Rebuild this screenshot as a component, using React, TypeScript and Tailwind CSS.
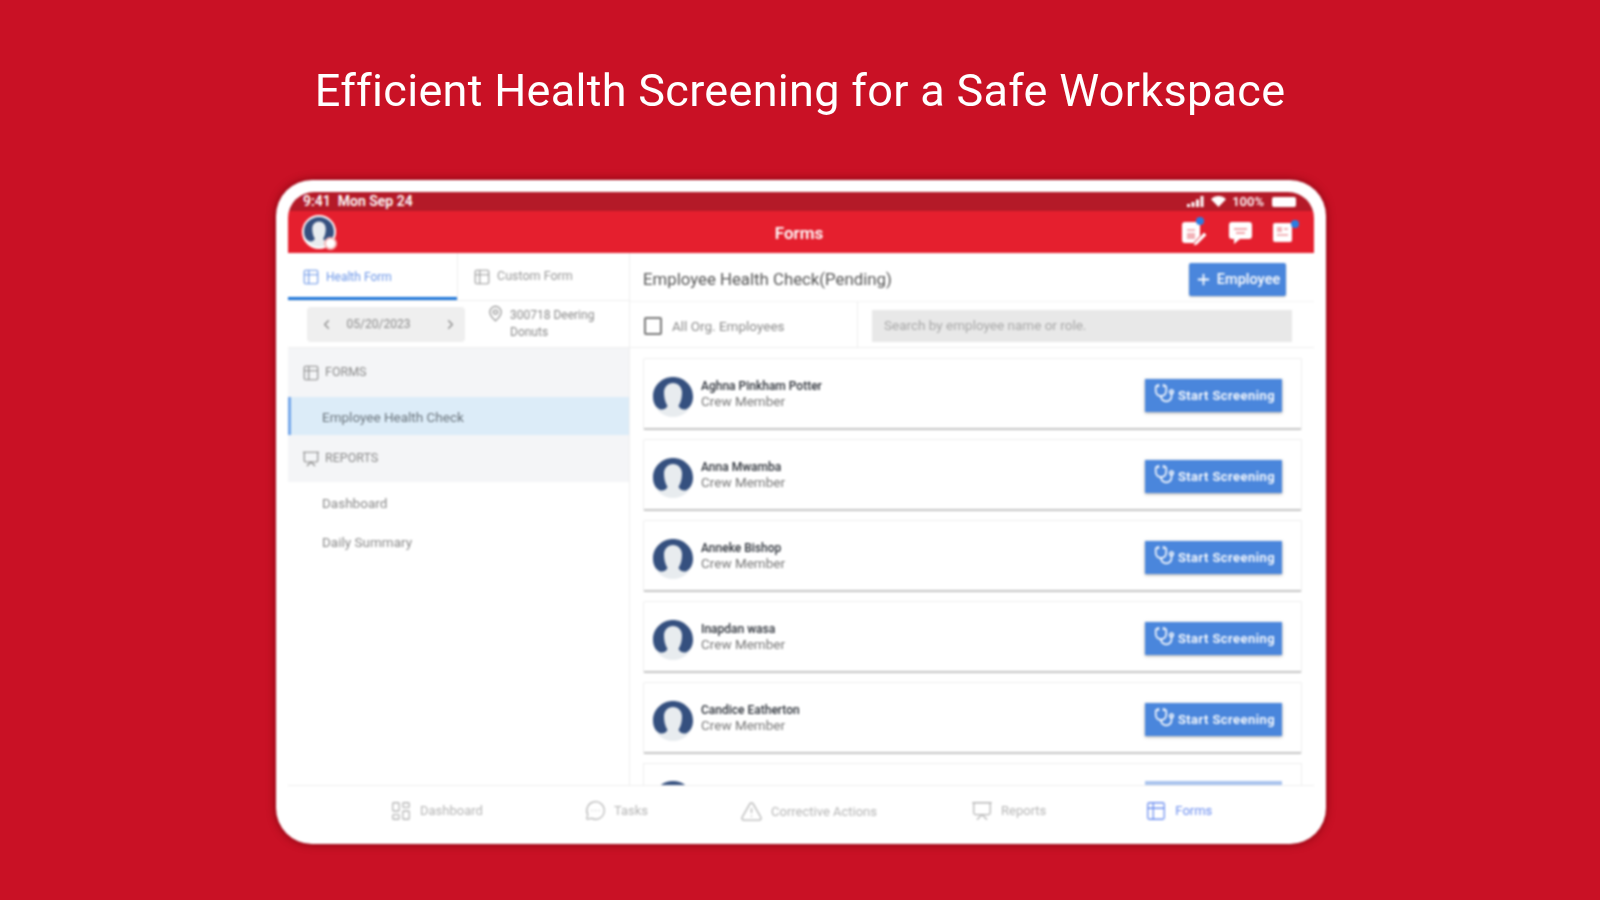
import React from "react";
import {
  ChevronLeft, ChevronRight, MapPin, Plus, Stethoscope,
  LayoutDashboard, MessageCircleMore, TriangleAlert, Presentation, Table2,
} from "lucide-react";

const Avatar = ({ size = 40 }: { size?: number }) => (
  <svg width={size} height={size} viewBox="0 0 40 40" className="shrink-0">
    <circle cx="20" cy="20" r="20" fill="#e8ecef" />
    <path d="M20 0C9 0 0 8.500 0 19.500C0 25 2 29 5 31C7.500 33.500 12.500 33 14.500 29C12 25 11 20 11 15.500C11 10 15 6 20 6C25 6 29 10 29 15.500C29 20 28 25 25.500 29C27.500 33 32.500 33.500 35 31C38 29 40 25 40 19.500C40 8.500 31 0 20 0Z" fill="#35507f" />
  </svg>
);

const ClipIcon = () => (
  <svg width="30" height="30" viewBox="0 0 30 30">
    <rect x="3" y="5" width="18" height="21" rx="3" fill="#ffffff" />
    <rect x="8" y="12" width="8" height="2" fill="#f2b3b8" />
    <rect x="8" y="16" width="8" height="6" fill="#f2b3b8" />
    <path d="M15 26L25 15L28 18L18 28L14 29Z" fill="#ffffff" stroke="#e51f2e" strokeWidth="1" />
  </svg>
);

const BubbleIcon = () => (
  <svg width="25" height="25" viewBox="0 0 25 25">
    <path d="M4 2H21A3 3 0 0 1 24 5V16A3 3 0 0 1 21 19H12L6 24V19H4A3 3 0 0 1 1 16V5A3 3 0 0 1 4 2Z" fill="#ffffff" />
    <rect x="6" y="8" width="13" height="2" fill="#f2a5ab" />
    <rect x="8" y="12" width="9" height="2" fill="#f2a5ab" />
  </svg>
);

const NoteIcon = () => (
  <svg width="24" height="24" viewBox="0 0 24 24">
    <rect x="1" y="3" width="19" height="19" rx="2" fill="#ffffff" />
    <rect x="5" y="7" width="5" height="5" fill="#f2b3b8" />
    <rect x="5" y="14" width="11" height="2" fill="#f2b3b8" />
    <rect x="12" y="8" width="4" height="2" fill="#f2b3b8" />
  </svg>
);

const SignalBars = () => (
  <svg width="18" height="11" viewBox="0 0 18 11">
    <rect x="0" y="8" width="3" height="3" fill="#ffffff" />
    <rect x="4.500" y="6" width="3" height="5" fill="#ffffff" />
    <rect x="9" y="3.500" width="3" height="7.500" fill="#ffffff" />
    <rect x="13.500" y="0" width="3" height="11" fill="#ffffff" />
  </svg>
);

const WifiFilled = () => (
  <svg width="15" height="11" viewBox="0 0 15 11">
    <path d="M7.500 11L0 3.200C4.200 -1 10.800 -1 15 3.200Z" fill="#ffffff" />
  </svg>
);

const people = ["Aghna Pinkham Potter", "Anna Mwamba", "Anneke Bishop", "Inapdan wasa", "Candice Eatherton"];

function Card({ name }: { name: string }) {
  return (
    <div className="h-[72px] shrink-0 flex items-center pl-[9px] pr-[19px] bg-white rounded-[2px] border border-[#eeeeee] border-b-2 border-b-[#c4c4c4]">
      <div className="mt-[6px]"><Avatar /></div>
      <div className="ml-[8px] flex flex-col">
        <span className="text-[12px] leading-[15px] font-medium text-[#2b3038]">{name}</span>
        <span className="text-[13.500px] leading-[15px] text-[#777]">Crew Member</span>
      </div>
      <button className="ml-auto mt-[4px] w-[137px] h-[33px] bg-[#4a86dc] shadow-[0_1px_3px_rgba(0,0,0,0.35)] flex items-center justify-center gap-[3px] pl-[2px] text-white text-[13px] font-semibold tracking-[0.45px]">
        <Stethoscope size={21} className="-mt-[5px]" strokeWidth={1.8} />
        <span>Start Screening</span>
      </button>
    </div>
  );
}

function NavItem({ icon, label, active, className = "" }: { icon: React.ReactNode; label: string; active?: boolean; className?: string }) {
  return (
    <div className={`flex items-center gap-[8px] text-[13px] ${active ? "text-[#6d8ff0]" : "text-[#b5b5b5]"} ${className}`}>
      {icon}
      <span>{label}</span>
    </div>
  );
}

export default function App() {
  return (
    <div className="w-[1600px] h-[900px] bg-[#c91125] flex flex-col items-center overflow-hidden" style={{ fontFamily: "Roboto, 'Liberation Sans', sans-serif" }}>
      <h1 className="mt-[63px] h-[56px] leading-[56px] text-[45px] font-normal text-white blur-[0.4px] tracking-[0.3px] [font-variant-ligatures:none]">
        Efficient Health Screening for a Safe Workspace
      </h1>
      <div className="mt-[61px] ml-[2px] w-[1050px] h-[664px] bg-white rounded-[36px] pt-[12px] px-[12px] flex flex-col shadow-[0_0_8px_rgba(110,0,10,0.85)] blur-[0.9px]">
        {/* status bar + header */}
        <div className="rounded-t-[26px] overflow-hidden shrink-0">
          <div className="h-[19px] bg-[#b41a28] flex items-center justify-between pl-[15px] pr-[18px] text-white text-[14px] font-semibold">
            <span>9:41&nbsp;&nbsp;Mon Sep 24</span>
            <div className="flex items-center gap-[6px] text-[13px]">
              <SignalBars />
              <WifiFilled />
              <span>100%</span>
              <span className="ml-[2px] w-[24px] h-[10px] bg-white rounded-[2px]" />
            </div>
          </div>
          <div className="h-[42px] bg-[#e51f2e] grid grid-cols-3 items-center pl-[14px] pr-[18px]">
            <div className="relative w-[34px] h-[34px] rounded-full border-2 border-white bg-white flex items-center justify-center">
              <Avatar size={30} />
              <span className="absolute -right-[3px] -bottom-[3px] w-[13px] h-[13px] rounded-full bg-white border-2 border-[#f4b6b6]" />
            </div>
            <span className="pt-[3px] text-center text-white text-[17px] font-semibold">Forms</span>
            <div className="flex items-center justify-end text-white">
              <div className="relative">
                <ClipIcon />
                <span className="absolute right-[5px] top-0 w-[8px] h-[8px] rounded-full bg-[#2a7de1]" />
              </div>
              <div className="ml-[19px]"><BubbleIcon /></div>
              <div className="relative ml-[19px]">
                <NoteIcon />
                <span className="absolute -right-[3px] top-0 w-[8px] h-[8px] rounded-full bg-[#2a7de1]" />
              </div>
            </div>
          </div>
        </div>

        {/* body */}
        <div className="flex h-[533px] border-b border-[#eeeeee]">
          {/* left column */}
          <div className="w-[342px] shrink-0 flex flex-col border-r border-[#eeeeee]">
            <div className="h-[48px] flex border-b border-[#eeeeee]">
              <div className="w-[169px] border-b-[3px] border-[#1a73d8] flex items-center pl-[14px] pt-[3px] gap-[6px] text-[#6d97e8] text-[12px]">
                <Table2 size={18} strokeWidth={1.5} />
                <span>Health Form</span>
              </div>
              <div className="flex-1 border-l border-[#eeeeee] flex items-center pl-[15px] gap-[6px] text-[#999] text-[12.500px]">
                <Table2 size={18} strokeWidth={1.5} />
                <span>Custom Form</span>
              </div>
            </div>
            <div className="h-[47px] flex items-center border-b border-[#eeeeee]">
              <div className="ml-[19px] w-[158px] h-[35px] bg-[#efefef] rounded-[4px] flex items-center justify-between pl-[12px] pr-[7px] text-[#8a8a8a] text-[12px]">
                <ChevronLeft size={15} />
                <span className="-ml-[20px]">05/20/2023</span>
                <ChevronRight size={15} />
              </div>
              <div className="ml-[22px] flex items-start gap-[6px] text-[#8a8a8a] text-[12px] leading-[17px]">
                <MapPin size={17} strokeWidth={1.6} className="-mt-[2px]" />
                <div>300718 Deering<br />Donuts</div>
              </div>
            </div>
            <div className="h-[49px] bg-[#f4f5f7] flex items-center pl-[14px] gap-[5px] text-[#8a8a8a] text-[12.500px]">
              <Table2 size={18} strokeWidth={1.5} />
              <span>FORMS</span>
            </div>
            <div className="h-[38px] bg-[#dcecf8] border-l-[3px] border-[#74a7ea] flex items-center pl-[31px] pt-[3px] text-[#6a747c] text-[13.500px]">Employee Health Check</div>
            <div className="h-[47px] bg-[#f4f5f7] flex items-center pl-[14px] gap-[5px] text-[#8a8a8a] text-[12.500px]">
              <Presentation size={18} strokeWidth={1.5} />
              <span>REPORTS</span>
            </div>
            <div className="h-[43px] flex items-center pl-[34px] text-[#8a8a8a] text-[13.500px]">Dashboard</div>
            <div className="h-[34px] flex items-center pl-[34px] text-[#8a8a8a] text-[13.500px]">Daily Summary</div>
          </div>

          {/* right column */}
          <div className="flex-1 min-w-0 flex flex-col">
            <div className="h-[49px] shrink-0 flex items-center justify-between pl-[13px] pr-[28px] pt-[5px] border-b border-[#f3f3f3]">
              <span className="text-[16.800px] text-[#555]">Employee Health Check(Pending)</span>
              <button className="w-[97px] h-[33px] bg-[#4a86dc] rounded-[2px] flex items-center justify-center gap-[5px] text-white text-[14.500px] font-medium shadow-[0_1px_2px_rgba(0,0,0,0.25)]">
                <Plus size={17} strokeWidth={2.5} />
                <span>Employee</span>
              </button>
            </div>
            <div className="h-[46px] shrink-0 flex items-center border-b border-[#eeeeee]">
              <div className="w-[228px] h-full flex items-center pl-[14px] pt-[3px] gap-[10px] border-r border-[#eeeeee]">
                <span className="w-[18px] h-[18px] border-2 border-[#777] rounded-[2px]" />
                <span className="text-[13.500px] text-[#8a8a8a]">All Org. Employees</span>
              </div>
              <div className="ml-[14px] mt-[2px] w-[420px] h-[32px] bg-[#e8e8e8] flex items-center pl-[12px] text-[13.500px] text-[#a8a8a8]">Search by employee name or role.</div>
            </div>
            <div className="flex-1 min-h-0 overflow-hidden pt-[10px] pl-[13px] pr-[12px] flex flex-col gap-[9px]">
              {people.map((p) => <Card key={p} name={p} />)}
              <div className="h-[72px] shrink-0 flex items-start pl-[9px] pr-[19px] pt-[17px] bg-white border border-[#eeeeee]">
                <Avatar />
                <span className="ml-auto w-[137px] h-[33px] bg-[#a9c3ee]" />
              </div>
            </div>
          </div>
        </div>

        {/* bottom nav */}
        <div className="flex-1 flex items-start pl-[102px] pt-[14px]">
          <NavItem icon={<LayoutDashboard size={22} strokeWidth={1.4} />} label="Dashboard" />
          <NavItem className="ml-[102px]" icon={<MessageCircleMore size={21} strokeWidth={1.4} />} label="Tasks" />
          <NavItem className="ml-[92px]" icon={<TriangleAlert size={23} strokeWidth={1.4} />} label="Corrective Actions" />
          <NavItem className="ml-[94px]" icon={<Presentation size={22} strokeWidth={1.4} />} label="Reports" />
          <NavItem className="ml-[99px] gap-[3px]" icon={<Table2 size={22} strokeWidth={1.4} />} label="Forms" active />
        </div>
      </div>
    </div>
  );
}
